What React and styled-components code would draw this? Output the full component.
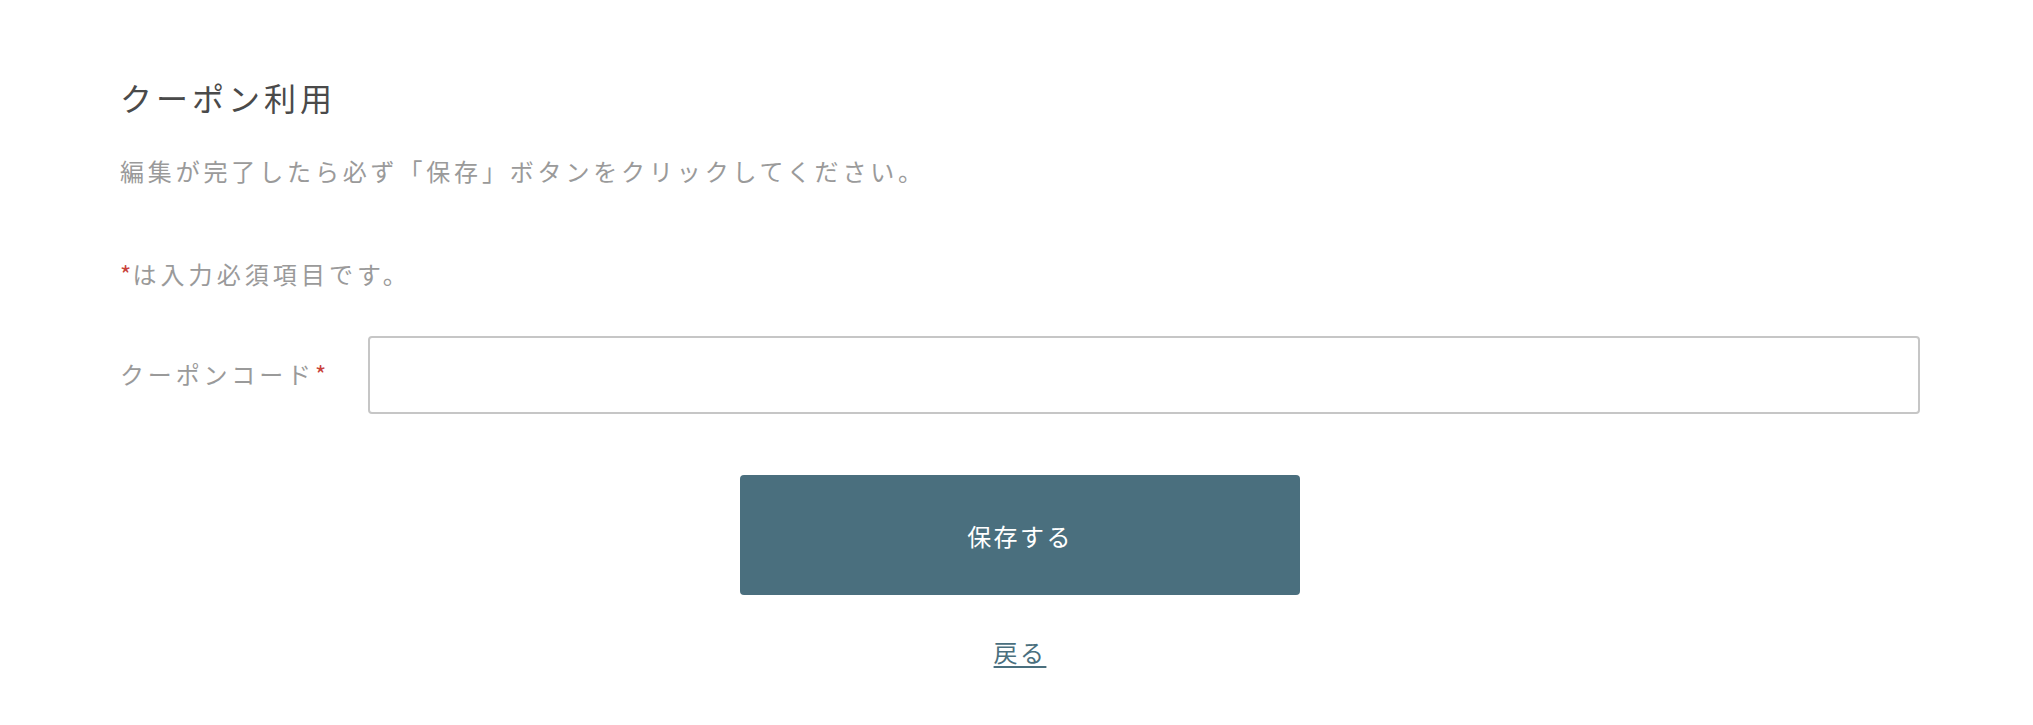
import React from 'react';
import styled, { createGlobalStyle } from 'styled-components';

const GlobalStyle = createGlobalStyle`
  body {
    margin: 0;
    background: #fff;
    font-family: "Noto Sans CJK JP", "Noto Sans", sans-serif;
  }
`;

const Page = styled.div`
  display: flex;
  flex-direction: column;
  padding: 75px 113px 40px 120px;
`;

const Title = styled.h2`
  margin: 0;
  font-size: 32px;
  font-weight: 400;
  line-height: 45px;
  letter-spacing: 0.125em;
  color: #4a4a4a;
`;

const Lead = styled.p`
  margin: 34px 0 0;
  font-size: 24px;
  line-height: 33px;
  letter-spacing: 0.16em;
  color: #9a9a9a;
`;

const Note = styled(Lead)`
  margin-top: 70px;
  letter-spacing: 0.17em;
`;

const Req = styled.span`
  color: #c9413a;
  letter-spacing: 0.05em;
`;

const FieldRow = styled.div`
  display: flex;
  align-items: center;
  margin-top: 46px;
`;

const Label = styled.label`
  flex: 0 0 248px;
  font-size: 24px;
  line-height: 33px;
  letter-spacing: 0.16em;
  color: #9a9a9a;
  margin-top: -3px;
`;

const Input = styled.input`
  flex: 1;
  height: 78px;
  box-sizing: border-box;
  border: 2px solid #c6c6c6;
  border-radius: 4px;
  padding: 0 20px;
  font-size: 22px;
  font-family: inherit;
  outline: none;
`;

const Actions = styled.div`
  display: flex;
  flex-direction: column;
  align-items: center;
  margin-top: 61px;
`;

const SaveButton = styled.button`
  width: 560px;
  height: 120px;
  border: none;
  border-radius: 4px;
  background: #4a6f7e;
  color: #fff;
  font-family: inherit;
  font-size: 24px;
  letter-spacing: 0.1em;
  cursor: pointer;
`;

const BackLink = styled.a`
  margin-top: 40px;
  font-size: 24px;
  line-height: 33px;
  letter-spacing: 0.1em;
  color: #4a6f7e;
  text-decoration: underline;
  text-underline-offset: 4px;
  cursor: pointer;
`;

export default function App() {
  return (
    <>
      <GlobalStyle />
      <Page>
        <Title>クーポン利用</Title>
        <Lead>編集が完了したら必ず「保存」ボタンをクリックしてください。</Lead>
        <Note>
          <Req>*</Req>
          は入力必須項目です。
        </Note>
        <FieldRow>
          <Label htmlFor="coupon">
            クーポンコード
            <Req>*</Req>
          </Label>
          <Input id="coupon" type="text" />
        </FieldRow>
        <Actions>
          <SaveButton type="button">保存する</SaveButton>
          <BackLink href="#">戻る</BackLink>
        </Actions>
      </Page>
    </>
  );
}
